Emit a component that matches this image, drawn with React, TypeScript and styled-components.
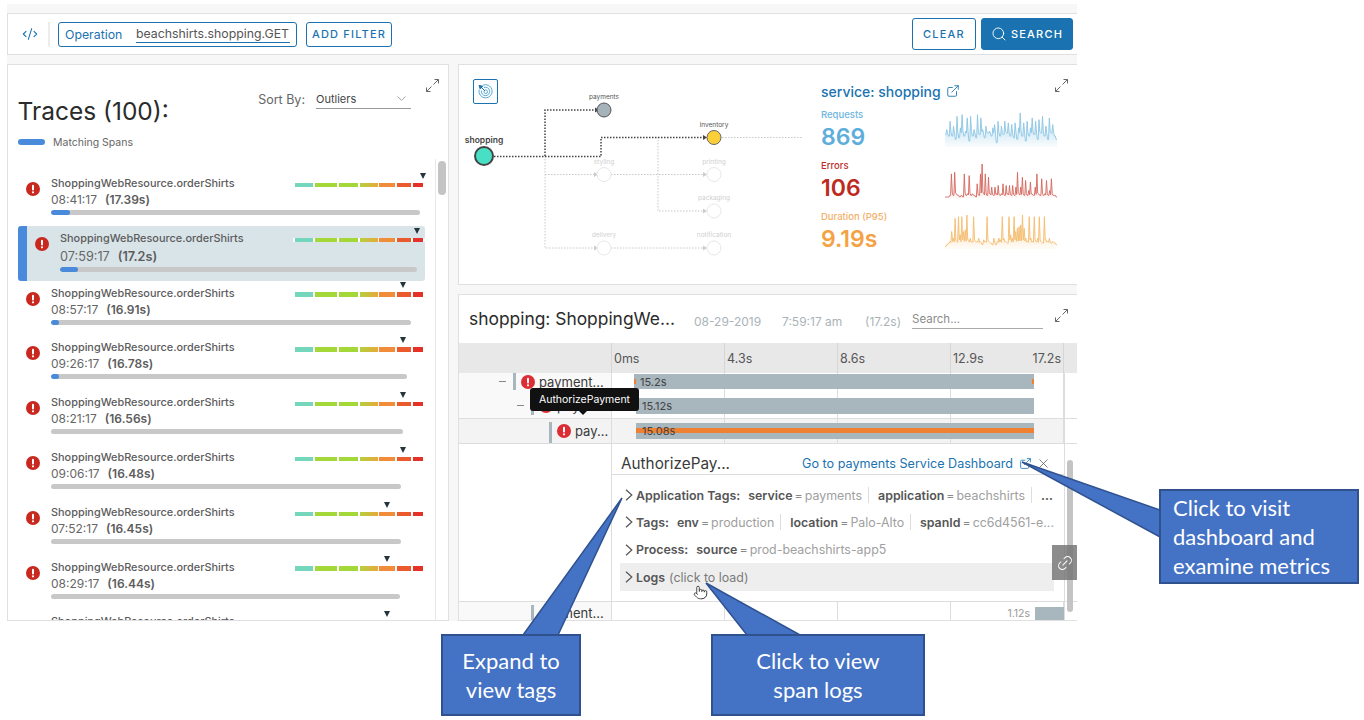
import React from 'react';
import styled, { createGlobalStyle } from 'styled-components';
import { ChevronDown, CodeXml, ExternalLink, Link2, Pointer, Search, X } from 'lucide-react';

const GlobalStyle = createGlobalStyle`
    html, body { margin: 0; background: #ffffff; }
    body { font-family: Inter, "Liberation Sans", sans-serif; color: #565656; }
    * { box-sizing: border-box; }
`;

const BLUE = '#1a73b0';
const LINE = '#e0e0e0';

const Page = styled.div`
    position: relative;
    width: 1364px;
    height: 720px;
    overflow: hidden;
`;

const Frame = styled.div`
    display: flex;
    flex-direction: column;
    gap: 9px;
    width: 1070px;
    height: 617px;
    margin: 4px 0 0 7px;
    padding-top: 9px;
    background: #f7f7f7;
`;

const Toolbar = styled.div`
    display: flex;
    align-items: center;
    height: 42px;
    padding: 0 4px 0 14px;
    background: #ffffff;
    border: 1px solid ${LINE};
    border-right: none;
`;

const ToolbarDivider = styled.div`
    width: 2px;
    height: 24px;
    margin: 0 8px 0 10px;
    background: #ececec;
`;

const FilterBox = styled.div`
    display: flex;
    align-items: center;
    width: 239px;
    height: 25px;
    padding-left: 6px;
    border: 1px solid ${BLUE};
    border-radius: 3px;
    font-size: 12.3px;
`;

const FilterKey = styled.span`
    width: 71px;
    color: ${BLUE};
`;

const FilterValue = styled.span`
    width: 154px;
    height: 18px;
    line-height: 17px;
    color: #555555;
    border-bottom: 1px solid ${BLUE};
    white-space: nowrap;
`;

const Button = styled.button<{ $solid?: boolean; $w: number; $h: number; $gap?: number }>`
    display: flex;
    align-items: center;
    justify-content: center;
    gap: 4px;
    width: ${(p) => p.$w}px;
    height: ${(p) => p.$h}px;
    margin-left: ${(p) => p.$gap ?? 0}px;
    padding: 0;
    border: 1px solid ${BLUE};
    border-radius: 3px;
    background: ${(p) => (p.$solid ? BLUE : '#ffffff')};
    color: ${(p) => (p.$solid ? '#ffffff' : BLUE)};
    font-family: inherit;
    font-size: 11px;
    font-weight: 500;
    letter-spacing: 1.2px;
`;

const Spacer = styled.div`
    flex: 1;
`;

const Columns = styled.div`
    display: grid;
    grid-template-columns: 442px 619px;
    gap: 9px;
    height: 557px;
`;

const Panel = styled.section`
    position: relative;
    background: #ffffff;
    border: 1px solid ${LINE};
    overflow: hidden;
`;

const RightColumn = styled.div`
    display: flex;
    flex-direction: column;
    gap: 9px;
`;

const ExpandCorner = styled.div<{ $right: number; $top: number }>`
    position: absolute;
    top: ${(p) => p.$top}px;
    right: ${(p) => p.$right}px;
    width: 13px;
    height: 13px;
    color: #666666;
`;

const TitleRow = styled.div`
    display: flex;
    justify-content: space-between;
    height: 60px;
    padding: 0 37px 0 9.5px;
`;

const Title = styled.h1`
    margin: 32px 0 0;
    font-size: 24.5px;
    line-height: 28px;
    font-weight: 400;
    color: #2b2b2b;
`;

const SortBy = styled.div`
    display: flex;
    align-items: center;
    gap: 11px;
    height: 20px;
    margin-top: 24px;
    font-size: 12.5px;
    color: #666666;
`;

const SortSelect = styled.div`
    display: flex;
    align-items: center;
    justify-content: space-between;
    width: 95px;
    height: 20px;
    color: #444444;
    font-size: 11px;
    border-bottom: 1px solid #999999;
    svg { margin-right: 2px; color: #888888; }
`;

const Legend = styled.div`
    display: flex;
    align-items: center;
    gap: 8px;
    height: 16px;
    margin-top: 9px;
    padding-left: 10px;
    font-size: 10.5px;
    color: #666666;
`;

const LegendPill = styled.span`
    width: 27px;
    height: 6px;
    border-radius: 3px;
    background: #4a8ada;
`;

const TraceList = styled.div`
    width: 428px;
    height: 461px;
    margin-top: 9px;
    padding-top: 12px;
    border-right: 1px solid #e8e8e8;
    overflow: hidden;
`;

const ListThumb = styled.div`
    position: absolute;
    top: 96px;
    left: 430px;
    width: 8px;
    height: 34px;
    border-radius: 4px;
    background: #c4c4c4;
`;

const TraceRow = styled.div<{ $selected?: boolean }>`
    display: flex;
    height: 54.8px;
    margin-left: ${(p) => (p.$selected ? 10 : 0)}px;
    padding-left: ${(p) => (p.$selected ? 8 : 18)}px;
    width: ${(p) => (p.$selected ? 407 : 417)}px;
    background: ${(p) => (p.$selected ? '#d9e4e9' : 'transparent')};
    border-left: ${(p) => (p.$selected ? '9px solid #4a8ada' : 'none')};
    border-radius: 3px;
`;

const ErrorSlot = styled.div`
    width: 14px;
    margin-top: 9px;
    margin-right: 11px;
`;

const TraceBody = styled.div`
    flex: 1;
    padding-top: 5px;
`;

const NameLine = styled.div`
    display: flex;
    align-items: center;
    justify-content: space-between;
    height: 14px;
`;

const TraceName = styled.span`
    font-size: 10.9px;
    font-weight: 500;
    color: #5c5c5c;
    white-space: nowrap;
`;

const Histogram = styled.div<{ $selected?: boolean }>`
    position: relative;
    display: flex;
    gap: 1.67px;
    width: 132px;
    height: 4.5px;
    margin-top: 4px;
    padding: 0 2px;
    background: ${(p) => (p.$selected ? '#ffffff' : 'transparent')};
`;

const HistogramCell = styled.span<{ $w: number; $fill: string }>`
    width: ${(p) => p.$w}px;
    background: ${(p) => p.$fill};
`;

const Marker = styled.span<{ $x: number }>`
    position: absolute;
    top: -10px;
    left: ${(p) => p.$x - 3.5}px;
    border-left: 3.5px solid transparent;
    border-right: 3.5px solid transparent;
    border-top: 6px solid #26343c;
`;

const TimeLine = styled.div<{ $selected?: boolean }>`
    margin-top: ${(p) => (p.$selected ? 5 : 3)}px;
    height: 14px;
    line-height: 14px;
    font-size: ${(p) => (p.$selected ? 12.7 : 12)}px;
    color: #666666;
    b { font-weight: 600; margin-left: ${(p) => (p.$selected ? 8 : 8)}px; color: #5c5c5c; }
`;

const DurationTrack = styled.div<{ $w: number }>`
    width: ${(p) => p.$w}px;
    height: 5px;
    margin-top: 3px;
    border-radius: 3px;
    background: #c8c8c8;
    overflow: hidden;
`;

const DurationMatch = styled.div<{ $w: number }>`
    width: ${(p) => p.$w}px;
    height: 5px;
    border-radius: 3px;
    background: #4a8ada;
`;

const TopPanel = styled(Panel)`
    display: flex;
    height: 221px;
    border-right: none;
`;

const GraphArea = styled.div`
    position: relative;
    width: 345px;
    height: 219px;
`;

const RadarButton = styled.div`
    position: absolute;
    top: 14px;
    left: 14px;
    display: flex;
    align-items: center;
    justify-content: center;
    width: 25px;
    height: 25px;
    border: 1px solid ${BLUE};
    border-radius: 2px;
    background: #ffffff;
`;

const MetricsArea = styled.div`
    padding: 18px 0 0 17px;
`;

const ServiceLink = styled.div`
    display: flex;
    align-items: center;
    gap: 5px;
    height: 16px;
    margin-bottom: 9px;
    font-size: 14px;
    font-weight: 500;
    color: ${BLUE};
`;

const MetricRow = styled.div`
    display: grid;
    grid-template-columns: 124px 112px;
    height: 51px;
`;

const MetricLabel = styled.div<{ $color: string }>`
    height: 12px;
    line-height: 13px;
    font-size: 9.5px;
    font-weight: 500;
    color: ${(p) => p.$color};
`;

const MetricValue = styled.div<{ $color: string }>`
    height: 28px;
    margin-top: 3px;
    line-height: 28px;
    font-size: 23px;
    font-weight: 600;
    color: ${(p) => p.$color};
`;

const Spark = styled.svg`
    display: block;
    width: 112px;
    height: 36px;
    margin-top: 4px;
`;

const BottomPanel = styled(Panel)`
    height: 327px;
    border-right: none;
`;

const DetailHeader = styled.div`
    display: flex;
    align-items: center;
    height: 48px;
    padding-left: 10px;
`;

const SpanTitle = styled.h2`
    width: 225px;
    margin: 0 0 2px;
    font-size: 17.4px;
    font-weight: 400;
    color: #2b2b2b;
    white-space: nowrap;
`;

const MetaText = styled.span<{ $w: number }>`
    width: ${(p) => p.$w}px;
    margin-top: 5px;
    font-size: 12px;
    color: #aab3b8;
    white-space: nowrap;
`;

const SearchField = styled.input`
    width: 131px;
    height: 20px;
    padding: 0;
    border: none;
    border-bottom: 1px solid #aaaaaa;
    outline: none;
    font-family: inherit;
    font-size: 11.5px;
    &::placeholder { color: #8c8c8c; opacity: 1; }
`;

const Timeline = styled.div`
    position: relative;
`;

const RulerRow = styled.div`
    display: flex;
    height: 30px;
    background: #e8e8e8;
    font-size: 12.5px;
    color: #565656;
`;

const RulerLabelCell = styled.div`
    width: 153px;
    border-right: 1px solid #d6d6d6;
`;

const RulerTick = styled.div`
    display: flex;
    justify-content: space-between;
    align-items: center;
    width: 113px;
    padding: 0 2px 0 2px;
    border-right: 1px solid #d6d6d6;
`;

const SpanRowLine = styled.div<{ $h: number; $active?: boolean }>`
    display: flex;
    height: ${(p) => p.$h}px;
    background: ${(p) => (p.$active ? '#f3f3f3' : 'transparent')};
    border-top: ${(p) => (p.$active ? '1px solid #dddddd' : 'none')};
    border-bottom: ${(p) => (p.$active ? '1px solid #dddddd' : 'none')};
`;

const TreeCell = styled.div<{ $indent: number; $top?: number; $bottom?: number; $active?: boolean }>`
    display: flex;
    flex: none;
    width: 153px;
    padding: ${(p) => p.$top ?? 0}px 0 ${(p) => p.$bottom ?? 0}px ${(p) => p.$indent}px;
    background: ${(p) => (p.$active ? '#f3f3f3' : '#f9f9f9')};
    border-right: 1px solid #dddddd;
    overflow: hidden;
`;

const TreeLabel = styled.div<{ $lift?: number }>`
    display: flex;
    align-items: center;
    margin-bottom: ${(p) => p.$lift ?? 0}px;
`;

const Collapse = styled.span`
    flex: none;
    align-self: center;
    width: 7px;
    height: 1.5px;
    margin-right: 7px;
    background: #888888;
`;

const DepthBar = styled.span<{ $gap?: number }>`
    flex: none;
    width: 3px;
    margin-right: ${(p) => p.$gap ?? 5}px;
    background: #a9b6bd;
`;

const SpanName = styled.span`
    flex: none;
    margin-left: 4px;
    font-size: 13px;
    color: #3a3a3a;
    white-space: nowrap;
`;

const Track = styled.div<{ $pad: number; $end?: boolean }>`
    display: flex;
    justify-content: ${(p) => (p.$end ? 'flex-end' : 'flex-start')};
    align-items: ${(p) => (p.$end ? 'flex-end' : 'flex-start')};
    width: 452px;
    flex: none;
    padding-top: ${(p) => p.$pad}px;
    background: repeating-linear-gradient(to right, transparent 0 112px, #dddddd 112px 113px);
`;

const SpanBar = styled.div<{ $left: number; $w: number; $h: number; $stripe?: boolean; $ticks?: boolean }>`
    display: flex;
    align-items: center;
    width: ${(p) => p.$w}px;
    height: ${(p) => p.$h}px;
    margin-left: ${(p) => p.$left}px;
    padding-left: 6px;
    font-size: 11px;
    color: #444444;
    background: ${(p) =>
        p.$stripe
            ? 'linear-gradient(to bottom, #a8b6bd 5px, #f08032 5px, #f08032 10px, #a8b6bd 10px)'
            : p.$ticks
              ? 'linear-gradient(#f08032, #f08032) left center / 2px 5px no-repeat, linear-gradient(#f08032, #f08032) right center / 2px 5px no-repeat, #a8b6bd'
              : '#a8b6bd'};
`;

const RowGutter = styled.div`
    flex: 1;
    background: #ffffff;
    border-left: 1px solid #dddddd;
`;

const Tip = styled.div`
    position: absolute;
    top: 45px;
    left: 71px;
    display: flex;
    align-items: center;
    justify-content: center;
    width: 109px;
    height: 23px;
    border-radius: 3px;
    background: #111111;
    color: #ffffff;
    font-size: 10.5px;
    &::after {
        content: '';
        position: absolute;
        bottom: -4px;
        left: 49px;
        border-left: 4px solid transparent;
        border-right: 4px solid transparent;
        border-top: 4px solid #111111;
    }
`;

const DetailRow = styled.div`
    display: flex;
    height: 158px;
    border-bottom: 1px solid #dddddd;
`;

const DetailBlank = styled.div`
    flex: none;
    width: 153px;
    border-right: 1px solid #dddddd;
`;

const DetailBody = styled.div`
    flex: none;
    width: 452px;
`;

const DetailTop = styled.div`
    display: flex;
    align-items: center;
    justify-content: space-between;
    height: 31px;
    padding: 9px 13px 0 9px;
    border-bottom: 1px solid #dddddd;
`;

const DetailName = styled.span`
    font-size: 15.3px;
    color: #3a3a3a;
`;

const DashLink = styled.span`
    display: flex;
    align-items: center;
    gap: 6px;
    font-size: 12.6px;
    color: ${BLUE};
    svg:last-child { margin-left: -2px; color: #555555; }
`;

const TagList = styled.div`
    padding: 6.5px 10px 0 8px;
`;

const TagRow = styled.div<{ $shaded?: boolean }>`
    display: flex;
    align-items: center;
    height: 27.3px;
    padding-left: 5px;
    background: ${(p) => (p.$shaded ? '#eeeeee' : 'transparent')};
    font-size: 12.4px;
    white-space: nowrap;
`;

const TagChevron = styled.svg`
    flex: none;
    width: 8px;
    height: 12px;
    margin-right: 3px;
`;

const TagHeading = styled.b`
    font-weight: 600;
    margin-right: 8px;
`;

const TagKey = styled.b`
    font-weight: 600;
`;

const TagEq = styled.span`
    margin: 0 2px;
    color: #888888;
`;

const TagVal = styled.span`
    color: #a0a0a0;
`;

const TagSep = styled.span`
    width: 1px;
    height: 16px;
    margin: 0 9px 0 6px;
    background: #dddddd;
`;

const LogHint = styled.span`
    margin-left: 4px;
    color: #7a7a7a;
`;

const TailLabel = styled.span`
    margin: 0 5px 2px 0;
    font-size: 10.5px;
    color: #999999;
`;

const TailBar = styled.div`
    width: 29px;
    height: 15px;
    background: #a8b6bd;
`;

const DetailThumb = styled.div`
    position: absolute;
    top: 117px;
    left: 608px;
    width: 6px;
    height: 152px;
    border-radius: 3px;
    background: #c4c4c4;
`;

const LinkTab = styled.div`
    position: absolute;
    top: 202px;
    right: 0;
    display: flex;
    align-items: center;
    justify-content: center;
    width: 25px;
    height: 35px;
    background: rgba(120, 120, 120, 0.85);
    color: #ffffff;
    svg { transform: rotate(-45deg); }
`;

const HandCursor = styled.div`
    position: absolute;
    top: 584px;
    left: 693px;
    color: #222222;
    svg { fill: #ffffff; }
`;

const PointerLayer = styled.svg`
    position: absolute;
    top: 0;
    left: 0;
    width: 1364px;
    height: 720px;
`;

const CalloutBox = styled.div<{ $x: number; $y: number; $w: number; $h: number; $left?: boolean }>`
    position: absolute;
    top: ${(p) => p.$y}px;
    left: ${(p) => p.$x}px;
    display: flex;
    flex-direction: column;
    justify-content: center;
    width: ${(p) => p.$w}px;
    height: ${(p) => p.$h}px;
    padding-left: ${(p) => (p.$left ? 12 : 0)}px;
    border: 2px solid #2f528f;
    background: #4472c4;
    color: #ffffff;
    font-family: Lato, "Open Sans", sans-serif;
    font-size: 22px;
    line-height: 29px;
    text-align: ${(p) => (p.$left ? 'left' : 'center')};
`;

const ExpandIcon = () => (
    <svg width="13" height="13" viewBox="0 0 13 13" fill="none" stroke="currentColor" strokeWidth="1">
        <path d="M7.5 5.5 12.5 .5M8.5 .5h4v4M5.5 7.5 .5 12.5M.5 8.5v4h4" />
    </svg>
);

const ErrorIcon = ({ color = '#c9281f' }: { color?: string }) => (
    <svg width="14" height="14" viewBox="0 0 14 14">
        <circle cx="7" cy="7" r="7" fill={color} />
        <rect x="6" y="2.8" width="2" height="5.6" rx="1" fill="#ffffff" />
        <circle cx="7" cy="10.3" r="1.1" fill="#ffffff" />
    </svg>
);

const RadarIcon = () => (
    <svg width="15" height="15" viewBox="0 0 15 15" fill="none" stroke="#5aa9d8" strokeWidth="1">
        <path d="M5 1.2A6.6 6.6 0 1 1 1.2 5.5" />
        <path d="M6 3.5A4.2 4.2 0 1 1 3.4 6.5" />
        <circle cx="7.7" cy="7.7" r="1.8" />
        <path d="M1 1.5 4.8 2.2 2.2 5Z M3 3l4 4" fill="#1a73b0" stroke="#1a73b0" />
    </svg>
);

const Chevron = () => (
    <TagChevron viewBox="0 0 8 12" fill="none" stroke="#555555" strokeWidth="1.2">
        <path d="M1 .8 6.8 6 1 11.2" />
    </TagChevron>
);

const HISTOGRAM: [number, string][] = [
    [18.3, '#74d7bb'],
    [22, '#a4d838'],
    [19.3, '#a4d838'],
    [18, 'linear-gradient(to right, #b4d03c, #e8a93c)'],
    [15.7, '#f08c3a'],
    [14.4, '#ea5a2c'],
    [10, '#e53228'],
];

const TRACES = [
    { time: '08:41:17', dur: '17.39s', end: 420, match: 19, marker: 423.5 },
    { time: '07:59:17', dur: '17.2s', end: 417, match: 18, marker: 417, selected: true },
    { time: '08:57:17', dur: '16.91s', end: 411, match: 8, marker: 403 },
    { time: '09:26:17', dur: '16.78s', end: 407, match: 8, marker: 403 },
    { time: '08:21:17', dur: '16.56s', end: 403, match: 0, marker: 403 },
    { time: '09:06:17', dur: '16.48s', end: 401, match: 0, marker: 403 },
    { time: '07:52:17', dur: '16.45s', end: 401, match: 0, marker: 387 },
    { time: '08:29:17', dur: '16.44s', end: 400, match: 0, marker: 387 },
    { time: '08:14:17', dur: '16.4s', end: 400, match: 0, marker: 387 },
];

const REQUESTS = [
    0.35, 0.5, 0.3, 0.75, 0.3, 0.6, 0.2, 0.9, 0.25, 0.55, 0.95, 0.3, 0.45, 0.85, 0.15, 0.9, 0.3, 0.5, 0.25, 0.95, 0.35,
    0.85, 0.5, 0.25, 0.6, 0.4, 0.45, 0.3, 0.55, 0.65, 0.1, 0.75, 0.3, 0.6, 0.35, 0.75, 0.4, 0.7, 0.3, 0.65, 0.25, 0.7,
    0.2, 0.55, 1, 0.3, 0.7, 0.15, 0.75, 0.3, 0.55, 0.85, 0.35, 0.75, 0.2, 0.8, 0.4, 0.9, 0.3, 0.6, 0.2, 0.85, 0.4, 0.65,
    0.3, 0.2,
];

const ERRORS = [
    0, 0, 0, 0.05, 0.7, 0.05, 0.75, 0.1, 0.05, 0, 0.05, 0, 0.7, 0.05, 0.1, 0.65, 0.05, 0.1, 0.05, 0, 0.4, 0.05, 0.7, 1,
    0.1, 0.7, 0.05, 0.6, 0.1, 0.3, 0.05, 0.3, 0.1, 0.35, 0.05, 0.1, 0.4, 0.05, 0.35, 0.1, 0.35, 0.05, 0.35, 0.05, 0.3, 0.75,
    0.1, 0.3, 0.6, 0.05, 0.5, 0.05, 0.2, 0.45, 0.1, 0.05, 0.3, 0.7, 0.1, 0.05, 0.55, 0.05, 0.1, 0.5, 0.05, 0.2, 0.55, 0.05,
    0.05, 0,
];

const DURATIONS = [
    0.05, 0.1, 0.15, 0.2, 0.5, 0.3, 0.9, 0.2, 0.95, 0.4, 0.95, 0.5, 0.55, 1, 0.25, 0.3, 0.2, 0.95, 0.2, 0.2, 0.3, 0.2,
    0.1, 0.25, 0.2, 0.95, 0.2, 0.15, 0.1, 0.3, 0.1, 0.2, 0.3, 0.25, 0.95, 0.3, 0.2, 0.15, 0.95, 0.4, 0.3, 0.95, 0.5,
    0.6, 0.65, 0.7, 1, 0.6, 0.3, 0.2, 0.95, 0.3, 0.2, 0.95, 0.2, 0.3, 0.95, 0.2, 0.15, 0.95, 0.25, 0.2, 0.3, 0.15, 0.2,
    0.15, 0.1,
];

const METRICS = [
    { label: 'Requests', value: '869', labelColor: '#6db5de', color: '#5eaedb', line: '#8cc6e4', floor: 0.35, fill: 0.7, data: REQUESTS },
    { label: 'Errors', value: '106', labelColor: '#c0302a', color: '#bd2a20', line: '#d4665e', floor: 0.05, fill: 0.25, data: ERRORS },
    { label: 'Duration (P95)', value: '9.19s', labelColor: '#f3b06a', color: '#f4a244', line: '#f5bc6e', floor: 0.15, fill: 0.6, data: DURATIONS },
];

type SparkProps = { id: string; data: number[]; line: string; floor: number; fill: number };

// each sample is followed by a dip so the lines read as thin spikes
const Sparkline = ({ id, data, line, floor, fill }: SparkProps) => {
    const samples = data.flatMap((v) => [v, Math.min(v, floor + v * 0.1)]);
    const pts = samples.map((v, i) => `${((i / (samples.length - 1)) * 112).toFixed(1)},${(34 - v * 33).toFixed(1)}`).join(' ');
    return (
        <Spark viewBox="0 0 112 36">
            <defs>
                <linearGradient id={id} x1="0" y1="0" x2="0" y2="1">
                    <stop offset="0" stopColor={line} stopOpacity={fill} />
                    <stop offset="1" stopColor={line} stopOpacity="0.05" />
                </linearGradient>
            </defs>
            <polygon points={`0,35 ${pts} 112,35`} fill={`url(#${id})`} />
            <polyline points={pts} fill="none" stroke={line} strokeWidth="0.9" />
        </Spark>
    );
};

const NODES = [
    { x: 604, y: 110, label: 'payments', fill: '#a6b2ba', stroke: '#555', active: true },
    { x: 714, y: 137.5, label: 'inventory', fill: '#fbcf3a', stroke: '#666', active: true },
    { x: 604, y: 174.5, label: 'styling' },
    { x: 714, y: 174.5, label: 'printing' },
    { x: 714, y: 211, label: 'packaging' },
    { x: 604, y: 248, label: 'delivery' },
    { x: 714, y: 248, label: 'notification' },
];

const ServiceGraph = () => (
    <svg width="345" height="219" viewBox="459 65 345 219" fontFamily="Inter, sans-serif">
        <g fill="none" stroke="#c8c8c8" strokeDasharray="1.5 1.5">
            <path d="M545 156V248H597M545 174.5H597M611 174.5H706M658 137V211H706M611 248H706M722 137.5H803" />
        </g>
        <g fill="none" stroke="#444" strokeWidth="1.5" strokeDasharray="1.5 1.5">
            <path d="M494 156.5H601V137.5H706" />
            <path d="M545 156V110H596" />
        </g>
        <path d="M595 107.5 599 110 595 112.5Z" fill="#444" />
        <path d="M703 135 707 137.5 703 140Z" fill="#444" />
        <g fill="#ccc">
            <path d="M594 172 598 174.5 594 177ZM703 172 707 174.5 703 177ZM703 208.5 707 211 703 213.5ZM594 245.5 598 248 594 250.5ZM703 245.5 707 248 703 250.5Z" />
        </g>
        <circle cx="484" cy="156" r="9" fill="#48e0c4" stroke="#444" strokeWidth="2" />
        <text x="484" y="143" textAnchor="middle" fontSize="8.5" fontWeight="600" fill="#444">
            shopping
        </text>
        {NODES.map((n) => (
            <g key={n.label}>
                <circle cx={n.x} cy={n.y} r="7" fill={n.fill ?? '#fff'} stroke={n.stroke ?? '#e8e8e8'} />
                <text x={n.x} y={n.y - 11} textAnchor="middle" fontSize="6.5" fill={n.active ? '#555' : '#d0d0d0'}>
                    {n.label}
                </text>
            </g>
        ))}
    </svg>
);

const App = () => {
    return (
        <Page>
            <GlobalStyle />
            <Frame>
                <Toolbar>
                    <CodeXml size={16} color={BLUE} strokeWidth={1.6} />
                    <ToolbarDivider />
                    <FilterBox>
                        <FilterKey>Operation</FilterKey>
                        <FilterValue>beachshirts.shopping.GET</FilterValue>
                    </FilterBox>
                    <Button $w={86} $h={25} $gap={9}>
                        ADD FILTER
                    </Button>
                    <Spacer />
                    <Button $w={64} $h={32}>
                        CLEAR
                    </Button>
                    <Button $solid $w={92} $h={32} $gap={5}>
                        <Search size={16} strokeWidth={1.4} />
                        SEARCH
                    </Button>
                </Toolbar>
                <Columns>
                    <Panel>
                        <ExpandCorner $right={9} $top={11}>
                            <ExpandIcon />
                        </ExpandCorner>
                        <TitleRow>
                            <Title>Traces (100):</Title>
                            <SortBy>
                                Sort By:
                                <SortSelect>
                                    Outliers
                                    <ChevronDown size={15} strokeWidth={1.2} />
                                </SortSelect>
                            </SortBy>
                        </TitleRow>
                        <Legend>
                            <LegendPill />
                            Matching Spans
                        </Legend>
                        <TraceList>
                            {TRACES.map((t) => (
                                <TraceRow key={t.time} $selected={t.selected}>
                                    <ErrorSlot>
                                        <ErrorIcon />
                                    </ErrorSlot>
                                    <TraceBody>
                                        <NameLine>
                                            <TraceName>ShoppingWebResource.orderShirts</TraceName>
                                            <Histogram $selected={t.selected}>
                                                {HISTOGRAM.map(([w, fill]) => (
                                                    <HistogramCell key={w} $w={w} $fill={fill} />
                                                ))}
                                                <Marker $x={t.marker - 293} />
                                            </Histogram>
                                        </NameLine>
                                        <TimeLine $selected={t.selected}>
                                            {t.time}
                                            <b>({t.dur})</b>
                                        </TimeLine>
                                        <DurationTrack $w={t.end - (t.selected ? 60 : 51)}>
                                            <DurationMatch $w={t.match} />
                                        </DurationTrack>
                                    </TraceBody>
                                </TraceRow>
                            ))}
                        </TraceList>
                        <ListThumb />
                    </Panel>
                    <RightColumn>
                        <TopPanel>
                            <GraphArea>
                                <ServiceGraph />
                                <RadarButton>
                                    <RadarIcon />
                                </RadarButton>
                            </GraphArea>
                            <MetricsArea>
                                <ServiceLink>
                                    service: shopping
                                    <ExternalLink size={14} strokeWidth={1.5} />
                                </ServiceLink>
                                {METRICS.map((m) => (
                                    <MetricRow key={m.label}>
                                        <div>
                                            <MetricLabel $color={m.labelColor}>{m.label}</MetricLabel>
                                            <MetricValue $color={m.color}>{m.value}</MetricValue>
                                        </div>
                                        <Sparkline
                                            id={`spark-${m.label.slice(0, 3)}`}
                                            data={m.data}
                                            line={m.line}
                                            floor={m.floor}
                                            fill={m.fill}
                                        />
                                    </MetricRow>
                                ))}
                            </MetricsArea>
                            <ExpandCorner $right={9} $top={11}>
                                <ExpandIcon />
                            </ExpandCorner>
                        </TopPanel>
                        <BottomPanel>
                            <ExpandCorner $right={9} $top={11}>
                                <ExpandIcon />
                            </ExpandCorner>
                            <DetailHeader>
                                <SpanTitle>shopping: ShoppingWe...</SpanTitle>
                                <MetaText $w={88}>08-29-2019</MetaText>
                                <MetaText $w={83}>7:59:17 am</MetaText>
                                <MetaText $w={47}>(17.2s)</MetaText>
                                <SearchField placeholder="Search..." />
                            </DetailHeader>
                            <Timeline>
                                <RulerRow>
                                    <RulerLabelCell />
                                    <RulerTick>0ms</RulerTick>
                                    <RulerTick>4.3s</RulerTick>
                                    <RulerTick>8.6s</RulerTick>
                                    <RulerTick>
                                        <span>12.9s</span>
                                        <span>17.2s</span>
                                    </RulerTick>
                                </RulerRow>
                                <SpanRowLine $h={23}>
                                    <TreeCell $indent={40} $bottom={6}>
                                        <Collapse />
                                        <DepthBar />
                                        <TreeLabel>
                                            <ErrorIcon color="#dd2c33" />
                                            <SpanName>payment...</SpanName>
                                        </TreeLabel>
                                    </TreeCell>
                                    <Track $pad={1}>
                                        <SpanBar $left={22} $w={400} $h={15} $ticks>
                                            15.2s
                                        </SpanBar>
                                    </Track>
                                    <RowGutter />
                                </SpanRowLine>
                                <SpanRowLine $h={22}>
                                    <TreeCell $indent={58} $bottom={3}>
                                        <Collapse />
                                        <DepthBar />
                                        <TreeLabel>
                                            <ErrorIcon color="#dd2c33" />
                                            <SpanName>paym...</SpanName>
                                        </TreeLabel>
                                    </TreeCell>
                                    <Track $pad={2}>
                                        <SpanBar $left={24} $w={398} $h={16}>
                                            15.12s
                                        </SpanBar>
                                    </Track>
                                    <RowGutter />
                                </SpanRowLine>
                                <SpanRowLine $h={26} $active>
                                    <TreeCell $indent={90} $top={3} $active>
                                        <DepthBar />
                                        <TreeLabel $lift={3}>
                                            <ErrorIcon color="#dd2c33" />
                                            <SpanName>pay...</SpanName>
                                        </TreeLabel>
                                    </TreeCell>
                                    <Track $pad={4}>
                                        <SpanBar $left={24} $w={398} $h={16} $stripe>
                                            15.08s
                                        </SpanBar>
                                    </Track>
                                    <RowGutter />
                                </SpanRowLine>
                                <DetailRow>
                                    <DetailBlank />
                                    <DetailBody>
                                        <DetailTop>
                                            <DetailName>AuthorizePay...</DetailName>
                                            <DashLink>
                                                Go to payments Service Dashboard
                                                <ExternalLink size={13} strokeWidth={1.5} />
                                                <X size={15} strokeWidth={1.2} />
                                            </DashLink>
                                        </DetailTop>
                                        <TagList>
                                            <TagRow>
                                                <Chevron />
                                                <TagHeading>Application Tags:</TagHeading>
                                                <TagKey>service</TagKey>
                                                <TagEq>=</TagEq>
                                                <TagVal>payments</TagVal>
                                                <TagSep />
                                                <TagKey>application</TagKey>
                                                <TagEq>=</TagEq>
                                                <TagVal>beachshirts</TagVal>
                                                <TagSep />
                                                <TagKey>...</TagKey>
                                            </TagRow>
                                            <TagRow>
                                                <Chevron />
                                                <TagHeading>Tags:</TagHeading>
                                                <TagKey>env</TagKey>
                                                <TagEq>=</TagEq>
                                                <TagVal>production</TagVal>
                                                <TagSep />
                                                <TagKey>location</TagKey>
                                                <TagEq>=</TagEq>
                                                <TagVal>Palo-Alto</TagVal>
                                                <TagSep />
                                                <TagKey>spanId</TagKey>
                                                <TagEq>=</TagEq>
                                                <TagVal>cc6d4561-e...</TagVal>
                                            </TagRow>
                                            <TagRow>
                                                <Chevron />
                                                <TagHeading>Process:</TagHeading>
                                                <TagKey>source</TagKey>
                                                <TagEq>=</TagEq>
                                                <TagVal>prod-beachshirts-app5</TagVal>
                                            </TagRow>
                                            <TagRow $shaded>
                                                <Chevron />
                                                <TagKey>Logs</TagKey>
                                                <LogHint>(click to load)</LogHint>
                                            </TagRow>
                                        </TagList>
                                    </DetailBody>
                                    <RowGutter />
                                </DetailRow>
                                <SpanRowLine $h={20}>
                                    <TreeCell $indent={72} $top={3}>
                                        <DepthBar $gap={1} />
                                        <SpanName>payment...</SpanName>
                                    </TreeCell>
                                    <Track $pad={0} $end>
                                        <TailLabel>1.12s</TailLabel>
                                        <TailBar />
                                    </Track>
                                    <RowGutter />
                                </SpanRowLine>
                                <Tip>AuthorizePayment</Tip>
                                <DetailThumb />
                                <LinkTab>
                                    <Link2 size={18} strokeWidth={1.3} />
                                </LinkTab>
                            </Timeline>
                        </BottomPanel>
                    </RightColumn>
                </Columns>
            </Frame>
            <HandCursor>
                <Pointer size={15} strokeWidth={1.3} />
            </HandCursor>
            <PointerLayer viewBox="0 0 1364 720">
                <g fill="#4472c4" stroke="#2f528f" strokeWidth="1.5">
                    <polygon points="622,498 523,635 558,635" />
                    <polygon points="706,583 747,635 800,635" />
                    <polygon points="1022,462 1160,510 1160,537" />
                </g>
            </PointerLayer>
            <CalloutBox $x={441} $y={634} $w={140} $h={82}>
                <div>Expand to</div>
                <div>view tags</div>
            </CalloutBox>
            <CalloutBox $x={711} $y={634} $w={214} $h={82}>
                <div>Click to view</div>
                <div>span logs</div>
            </CalloutBox>
            <CalloutBox $x={1159} $y={489} $w={200} $h={95} $left>
                <div>Click to visit</div>
                <div>dashboard and</div>
                <div>examine metrics</div>
            </CalloutBox>
        </Page>
    );
};

export default App;
